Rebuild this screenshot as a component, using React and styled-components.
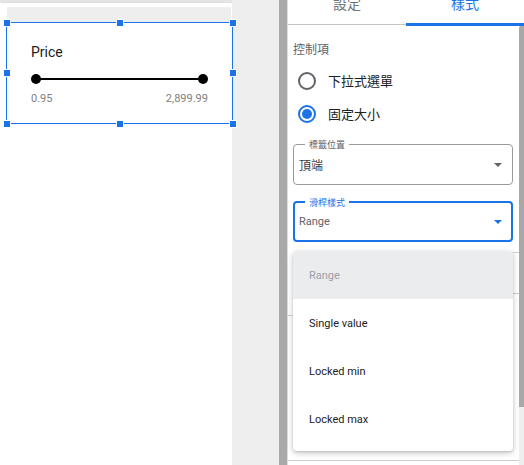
import React from "react";
import styled, { createGlobalStyle } from "styled-components";

const GlobalStyle = createGlobalStyle`
  html, body { margin: 0; padding: 0; }
  body {
    background: #eeeeee;
    font-family: Roboto, "Noto Sans CJK TC", sans-serif;
    width: 524px;
    height: 465px;
    overflow: hidden;
  }
`;

const BLUE = "#1a73e8";

const Page = styled.div`
  display: flex;
  height: 465px;
  width: 524px;
  background: linear-gradient(#e2e2e2, #eeeeee 3px);
`;

const Canvas = styled.div`
  width: 232px;
  margin-top: 3px;
  background: #ffffff;
  box-shadow: 1px 0 2px rgba(0, 0, 0, 0.18);
  padding-top: 4px;
  box-sizing: border-box;
  flex-shrink: 0;
`;

const TopBlock = styled.div`
  margin-left: 7px;
  width: 224px;
  height: 15px;
  background: #eeeeee;
`;

const Widget = styled.div`
  position: relative;
  margin-left: 6px;
  width: 227px;
  height: 102px;
  box-sizing: border-box;
  border: 1px solid ${BLUE};
  background: #ffffff;
  padding: 21px 24px 0;
  display: flex;
  flex-direction: column;
`;

const Handle = styled.span`
  position: absolute;
  width: 6px;
  height: 6px;
  background: ${BLUE};
  border: 1px solid #ffffff;
  ${(p) => (p.$x === "l" ? "left: -4px;" : p.$x === "r" ? "right: -5px;" : "left: calc(50% - 4px);")}
  ${(p) => (p.$y === "t" ? "top: -4px;" : p.$y === "b" ? "bottom: -5px;" : "top: calc(50% - 4px);")}
`;

const Title = styled.div`
  font-size: 14px;
  line-height: 16px;
  color: #212121;
`;

const Track = styled.div`
  position: relative;
  margin-top: 14px;
  height: 10px;
  display: flex;
  align-items: center;
  justify-content: space-between;
  &::before {
    content: "";
    position: absolute;
    left: 5px;
    right: 5px;
    top: 4px;
    height: 2px;
    background: #000000;
  }
`;

const Thumb = styled.span`
  position: relative;
  width: 10px;
  height: 10px;
  border-radius: 50%;
  background: #000000;
`;

const Ticks = styled.div`
  margin-top: 8px;
  display: flex;
  justify-content: space-between;
  font-size: 11px;
  line-height: 13px;
  color: #808080;
`;

const Gutter = styled.div`
  width: 47px;
  flex-shrink: 0;
  background: #eeeeee;
`;

const Strip = styled.div`
  width: 8px;
  flex-shrink: 0;
  background: #a9a9a9;
  border-right: 1px solid #dddddd;
`;

const Panel = styled.div`
  width: 236px;
  flex-shrink: 0;
  background: #ffffff;
  display: flex;
  flex-direction: column;
`;

const Tabs = styled.div`
  display: flex;
  height: 26px;
  align-items: flex-start;
`;

const Tab = styled.div`
  flex: 1;
  box-sizing: border-box;
  height: ${(p) => (p.$active ? "26px" : "25px")};
  border-bottom: ${(p) => (p.$active ? `3px solid ${BLUE}` : "1px solid #c4c4c4")};
  display: flex;
  justify-content: center;
  align-items: flex-start;
  overflow: hidden;
  font-size: 14px;
  color: ${(p) => (p.$active ? BLUE : "#70757a")};
  span {
    display: block;
    line-height: 14px;
    margin-top: -3px;
  }
`;

const Body = styled.div`
  flex: 1;
  display: flex;
  min-height: 0;
`;

const Content = styled.div`
  flex: 1;
  min-width: 0;
  padding: 16px 6px 0 5px;
  display: flex;
  flex-direction: column;
`;

const Scroll = styled.div`
  width: 5px;
  flex-shrink: 0;
  background: #eeeeee;
  display: flex;
  flex-direction: column;
`;

const ScrollThumb = styled.div`
  height: 381px;
  background: #a8a8a8;
  border-top-left-radius: 2px;
`;

const SectionLabel = styled.div`
  font-size: 12px;
  line-height: 16px;
  color: #5f6368;
`;

const Radios = styled.div`
  margin-top: 6px;
  display: flex;
  flex-direction: column;
`;

const RadioRow = styled.div`
  height: 33px;
  display: flex;
  align-items: center;
  gap: 12px;
  padding-left: 5px;
  font-size: 13px;
  color: #202124;
`;

const RadioCircle = styled.span`
  width: 18px;
  height: 18px;
  box-sizing: border-box;
  border-radius: 50%;
  border: 2px solid ${(p) => (p.$checked ? BLUE : "#5f6368")};
  display: flex;
  align-items: center;
  justify-content: center;
  &::after {
    content: "";
    width: 10px;
    height: 10px;
    border-radius: 50%;
    background: ${(p) => (p.$checked ? BLUE : "transparent")};
  }
`;

const SelectWrap = styled.div`
  position: relative;
  margin-top: ${(p) => p.$mt}px;
`;

const SelectBox = styled.div`
  position: relative;
  height: 41px;
  box-sizing: border-box;
  border-radius: 4px;
  border: ${(p) => (p.$focused ? `2px solid ${BLUE}` : "1px solid #9a9a9a")};
  padding: 0 ${(p) => (p.$focused ? 9 : 10)}px 0 ${(p) => (p.$focused ? 4 : 5)}px;
  display: flex;
  align-items: center;
  justify-content: space-between;
  font-size: ${(p) => (p.$latin ? "11px" : "12px")};
  color: ${(p) => (p.$focused ? "#5f6368" : "#3c4043")};
`;

const Notch = styled.span`
  position: absolute;
  top: -5px;
  left: ${(p) => (p.$focused ? 10 : 11)}px;
  padding: 0 4px;
  background: #ffffff;
  font-size: 9px;
  line-height: 11px;
  color: ${(p) => (p.$focused ? BLUE : "#5f6368")};
`;

const Caret = ({ color }) => (
  <svg width="8" height="4" viewBox="0 0 8 4">
    <polygon points="0,0 8,0 4,4" fill={color} />
  </svg>
);

const Menu = styled.div`
  position: absolute;
  top: 50px;
  left: 0;
  width: 220px;
  padding-bottom: 8px;
  background: #ffffff;
  border-radius: 4px;
  box-shadow: 0 2px 6px rgba(0, 0, 0, 0.22), 0 1px 2px rgba(0, 0, 0, 0.12);
  z-index: 5;
`;

const MenuItem = styled.div`
  height: 48px;
  display: flex;
  align-items: center;
  padding-left: 16px;
  font-size: 11px;
  background: ${(p) => (p.$selected ? "#ebecee" : "transparent")};
  color: ${(p) => (p.$selected ? "#9aa0a6" : "#202124")};
  &:first-child {
    border-radius: 4px 4px 0 0;
  }
`;

const Divider = styled.div`
  flex-shrink: 0;
  height: 1px;
  background: #cfcfcf;
  margin-top: ${(p) => p.$mt}px;
  margin-left: ${(p) => p.$from}px;
  width: ${(p) => p.$w}px;
`;

const handles = [
  ["l", "t"], ["m", "t"], ["r", "t"],
  ["l", "m"], ["r", "m"],
  ["l", "b"], ["m", "b"], ["r", "b"],
];

export default function App() {
  return (
    <>
      <GlobalStyle />
      <Page>
        <Canvas>
          <TopBlock />
          <Widget>
            <Title>Price</Title>
            <Track>
              <Thumb />
              <Thumb />
            </Track>
            <Ticks>
              <span>0.95</span>
              <span>2,899.99</span>
            </Ticks>
            {handles.map(([x, y]) => (
              <Handle key={x + y} $x={x} $y={y} />
            ))}
          </Widget>
        </Canvas>
        <Gutter />
        <Strip />
        <Panel>
          <Tabs>
            <Tab><span>設定</span></Tab>
            <Tab $active><span>樣式</span></Tab>
          </Tabs>
          <Body>
            <Content>
              <SectionLabel>控制項</SectionLabel>
              <Radios>
                <RadioRow>
                  <RadioCircle />
                  <span>下拉式選單</span>
                </RadioRow>
                <RadioRow>
                  <RadioCircle $checked />
                  <span>固定大小</span>
                </RadioRow>
              </Radios>
              <SelectWrap $mt={14}>
                <SelectBox>
                  <Notch>標籤位置</Notch>
                  <span>頂端</span>
                  <Caret color="#5f6368" />
                </SelectBox>
              </SelectWrap>
              <SelectWrap $mt={16}>
                <SelectBox $focused $latin>
                  <Notch $focused>滑桿樣式</Notch>
                  <span>Range</span>
                  <Caret color={BLUE} />
                </SelectBox>
                <Menu>
                  <MenuItem $selected>Range</MenuItem>
                  <MenuItem>Single value</MenuItem>
                  <MenuItem>Locked min</MenuItem>
                  <MenuItem>Locked max</MenuItem>
                </Menu>
              </SelectWrap>
              <Divider $mt={10} $from={120} $w={106} />
              <Divider $mt={40} $from={120} $w={106} />
              <Divider $mt={21} $from={-5} $w={120} />
              <Divider $mt={144} $from={-5} $w={231} />
            </Content>
            <Scroll>
              <ScrollThumb />
            </Scroll>
          </Body>
        </Panel>
      </Page>
    </>
  );
}
